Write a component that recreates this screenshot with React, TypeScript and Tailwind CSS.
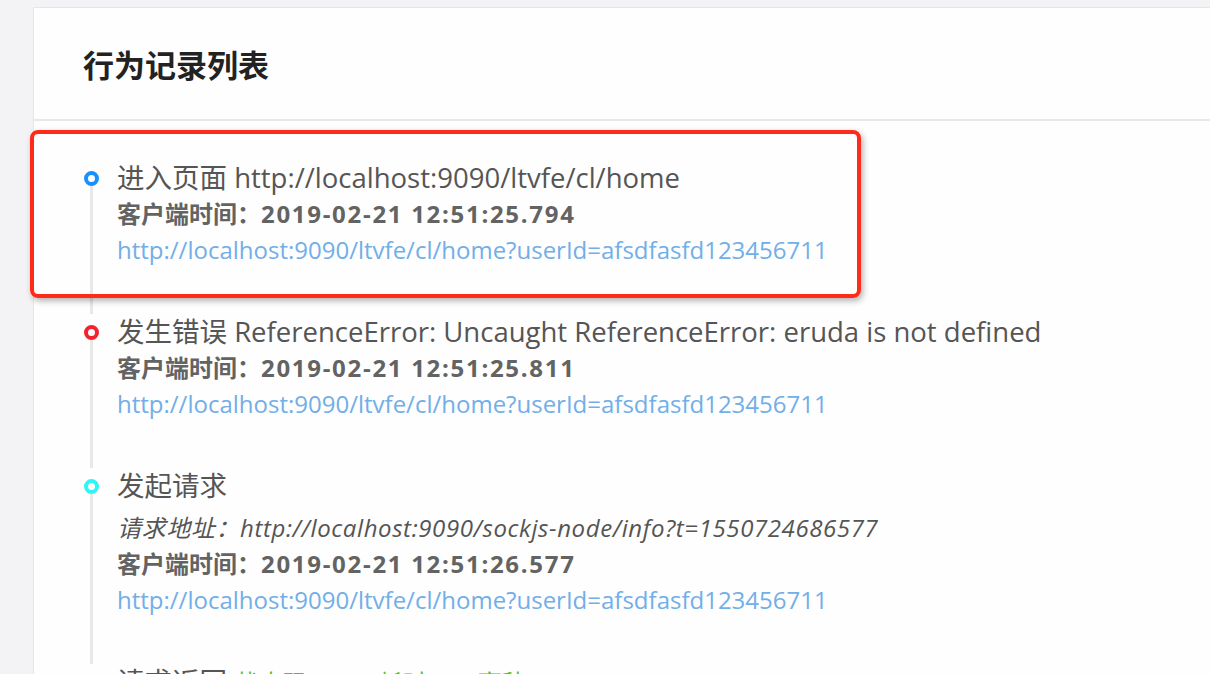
const URL = "http://localhost:9090/ltvfe/cl/home?userId=afsdfasfd123456711";

type Entry = {
  color: string;
  title: string;
  extra?: string;
  addr?: string;
  time?: string;
};

const entries: Entry[] = [
  { color: "border-[#1890ff]", title: "进入页面 http://localhost:9090/ltvfe/cl/home", time: "2019-02-21 12:51:25.794" },
  {
    color: "border-[#f5222d]",
    title: "发生错误 ReferenceError: Uncaught ReferenceError: eruda is not defined",
    time: "2019-02-21 12:51:25.811",
  },
  {
    color: "border-[#2ff5f5]",
    title: "发起请求",
    addr: "http://localhost:9090/sockjs-node/info?t=1550724686577",
    time: "2019-02-21 12:51:26.577",
  },
  { color: "border-[#52c41a]", title: "请求返回", extra: "状态码：200 耗时：36毫秒" },
];

function Item({ entry, last }: { entry: Entry; last: boolean }) {
  return (
    <li className="flex gap-[16px]">
      {/* dot + tail */}
      <div className="flex w-[20px] shrink-0 flex-col items-center">
        <div className={`mt-[11px] h-[15px] w-[15px] shrink-0 rounded-full border-[4px] bg-white ${entry.color}`} />
        {!last && <div className="w-[3px] flex-1 bg-[#e8e8e8]" />}
      </div>
      <div className="pb-[46px]">
        <div className="text-[27.5px] leading-[36px] text-[#555]">
          {entry.title}
          {entry.extra && <span className="ml-2 text-[24px] text-[#52c41a]">{entry.extra}</span>}
        </div>
        {entry.addr && (
          <div className="mt-[6px] text-[24px] italic leading-[36px] tracking-[0.6px] text-[#555]">
            请求地址：{entry.addr}
          </div>
        )}
        {entry.time && (
          <div className="text-[24px] font-bold leading-[36px] text-[#636363]">
            客户端时间：<span className="tracking-[1.7px]">{entry.time}</span>
          </div>
        )}
        {entry.time && <div className="text-[24px] leading-[36px] text-[#72aee8]">{URL}</div>}
      </div>
    </li>
  );
}

export default function App() {
  return (
    <div
      className="h-[674px] w-[1210px] overflow-hidden bg-[#f3f3f6] pl-[33px] pt-[7px]"
      style={{ fontFamily: '"Open Sans", "Noto Sans CJK SC", sans-serif' }}
    >
      <div className="relative h-full border-l border-t border-[#e6e6e8] bg-[#fefefe]">
        {/* header */}
        <div className="flex h-[113px] items-center border-b-2 border-[#e8e8e8] pl-[49px] pt-[4px]">
          <h2 className="text-[31px] font-semibold text-[#222]">行为记录列表</h2>
        </div>

        {/* timeline */}
        <ul className="pl-[47px] pt-[39px]">
          {entries.map((e, i) => (
            <Item key={i} entry={e} last={i === entries.length - 1} />
          ))}
        </ul>

        {/* highlight annotation */}
        <div className="pointer-events-none absolute left-[-4px] top-[122px] h-[168px] w-[831px] rounded-[8px] border-[4px] border-[#ff2a1a] shadow-[2px_3px_6px_rgba(0,0,0,0.3)]" />
      </div>
    </div>
  );
}
